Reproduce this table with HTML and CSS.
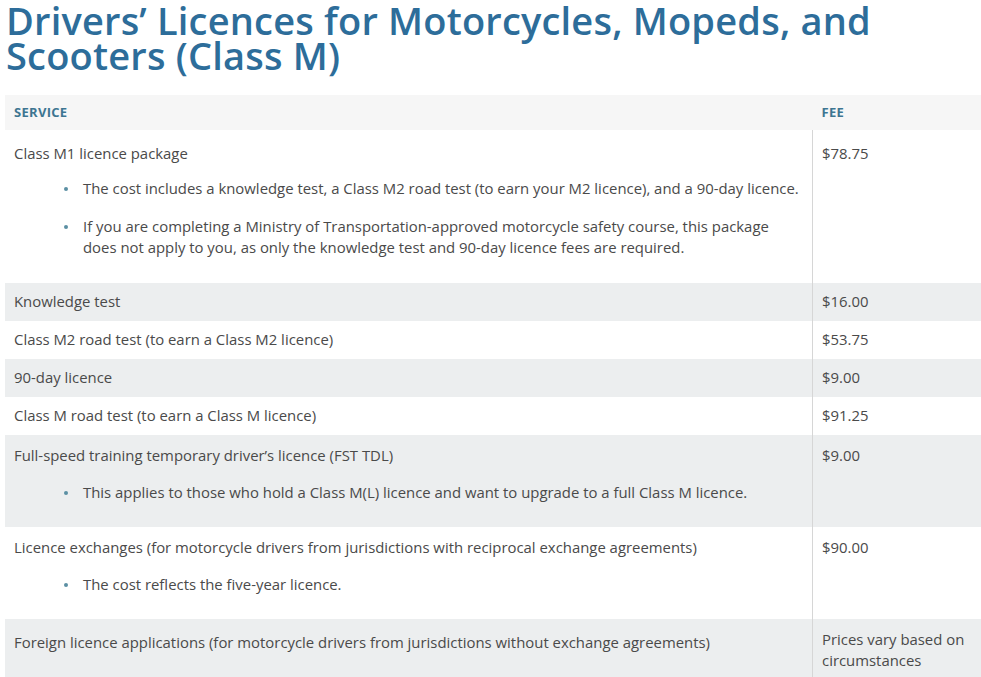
FILE: index.html
```html
<!DOCTYPE html>
<html>
<head>
<meta charset="utf-8">
<link rel="stylesheet" href="styles.css">
</head>
<body>
<h1 class="title">Drivers’ Licences for Motorcycles, Mopeds, and Scooters (Class M)</h1>
<table class="fees">
  <thead>
    <tr><th class="svc">SERVICE</th><th class="fee">FEE</th></tr>
  </thead>
  <tbody>
    <tr class="first list">
      <td class="svc">Class M1 licence package
        <ul>
          <li>The cost includes a knowledge test, a Class M2 road test (to earn your M2 licence), and a 90-day licence.</li>
          <li>If you are completing a Ministry of Transportation-approved motorcycle safety course, this package does not apply to you, as only the knowledge test and 90-day licence fees are required.</li>
        </ul>
      </td>
      <td class="fee">$78.75</td>
    </tr>
    <tr class="alt"><td class="svc">Knowledge test</td><td class="fee">$16.00</td></tr>
    <tr><td class="svc">Class M2 road test (to earn a Class M2 licence)</td><td class="fee">$53.75</td></tr>
    <tr class="alt"><td class="svc">90-day licence</td><td class="fee">$9.00</td></tr>
    <tr><td class="svc">Class M road test (to earn a Class M licence)</td><td class="fee">$91.25</td></tr>
    <tr class="alt list">
      <td class="svc">Full-speed training temporary driver’s licence (FST TDL)
        <ul><li>This applies to those who hold a Class M(L) licence and want to upgrade to a full Class M licence.</li></ul>
      </td>
      <td class="fee">$9.00</td>
    </tr>
    <tr class="list">
      <td class="svc">Licence exchanges (for motorcycle drivers from jurisdictions with reciprocal exchange agreements)
        <ul><li>The cost reflects the five-year licence.</li></ul>
      </td>
      <td class="fee">$90.00</td>
    </tr>
    <tr class="alt last">
      <td class="svc">Foreign licence applications (for motorcycle drivers from jurisdictions without exchange agreements)</td>
      <td class="fee">Prices vary based on circumstances</td>
    </tr>
  </tbody>
</table>
</body>
</html>
```

FILE: styles.css
```css
html, body {
  margin: 0;
  padding: 0;
  background: #ffffff;
}
body {
  padding: 0 0 0 5px;
  font-family: "Open Sans", "Liberation Sans", sans-serif;
  color: #4a4a4a;
  overflow: hidden;
}
.title {
  margin: 0 0 22px 1px;
  padding-top: 3px;
  font-size: 38px;
  line-height: 35px;
  font-weight: 600;
  color: #2d6d9a;
  letter-spacing: 0.2px;
}
.fees {
  border-collapse: collapse;
  width: 976px;
  font-size: 14.9px;
  line-height: 21px;
}
.fees th {
  background: #f6f6f6;
  text-align: left;
  font-size: 13px;
  font-weight: 700;
  color: #3d7591;
  letter-spacing: 0.3px;
  padding: 7px 9px 7px 9px;
  height: 21px;
  vertical-align: middle;
}
.fees td {
  padding: 8px 9px 9px 9px;
  vertical-align: top;
}
.fees td.fee {
  border-left: 1px solid #d6d6d6;
  width: 150px;
}
.fees tr.list td {
  padding-top: 10px;
}
.fees tr.first td {
  padding-top: 13px;
}
.fees tr.last td {
  padding-top: 10px;
}
.fees tr.last td.svc {
  padding-top: 13px;
}
.fees tr.alt td {
  background: #eceeef;
}
.fees ul {
  margin: 16px 0 15px 0;
  padding-left: 69px;
  list-style: none;
}
.fees tr.first ul {
  margin: 14px 0 16px 0;
}
.fees li {
  position: relative;
  margin-bottom: 17px;
}
.fees li:last-child {
  margin-bottom: 0;
}
.fees li::before {
  content: "";
  position: absolute;
  left: -19px;
  top: 9px;
  width: 4px;
  height: 4px;
  border-radius: 50%;
  background: #5b8fa3;
}
```
